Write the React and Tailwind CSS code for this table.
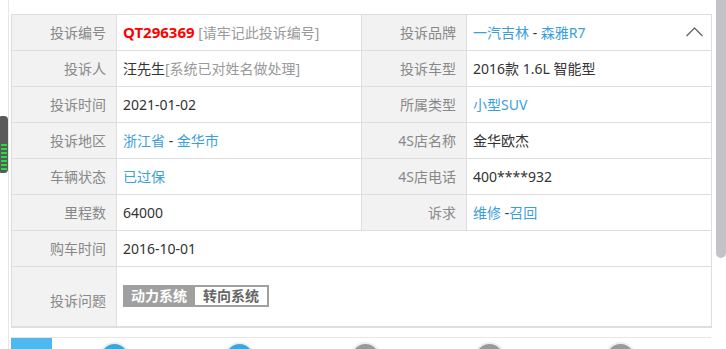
import React from "react";

const font = { fontFamily: '"Noto Sans", "Noto Sans CJK SC", sans-serif' };

function L({ children, className = "" }) {
  return (
    <td className={"w-[105px] bg-[#f2f2f2] border border-[#dedede] text-right pr-[10px] text-[#888] " + className}>
      {children}
    </td>
  );
}
function V({ children, colSpan, className = "" }) {
  return (
    <td colSpan={colSpan} className={"border border-[#dedede] pl-[6px] text-[#333] " + className}>
      {children}
    </td>
  );
}
const Blue = ({ children }) => <span className="text-[#3aa0dc]">{children}</span>;

export default function App() {
  return (
    <div className="relative w-[726px] h-[349px] overflow-hidden bg-white text-[14px]" style={font}>
      <div className="flex h-full">
        <div className="relative w-[9px] h-full border-r border-[#e6e6e6] shrink-0">
          <div className="absolute left-0 top-[116px] w-[8px] h-[57px] bg-[#5a5a5a] rounded-r-[4px] rounded-l-[1px] flex flex-col justify-end items-center pb-[3px] gap-[2px]">
            {[0, 1, 2, 3, 4, 5, 6].map((i) => (
              <div key={i} className="w-[6px] h-[2px] bg-[#22dd44]" />
            ))}
          </div>
        </div>
        <div className="pl-[2px] pt-[14px]">
          <table className="w-[700px] border-collapse table-fixed border-b-2 border-b-[#dedede]">
            <colgroup>
              <col className="w-[105px]" />
              <col className="w-[245px]" />
              <col className="w-[105px]" />
              <col className="w-[245px]" />
            </colgroup>
            <tbody>
              <tr className="h-[36px]">
                <L>投诉编号</L>
                <V>
                  <span className="text-[#f00] font-bold text-[15px]">QT296369</span>
                  <span className="text-[#999]"> [请牢记此投诉编号]</span>
                </V>
                <L>投诉品牌</L>
                <V className="pr-[8px]">
                  <div className="flex items-center justify-between">
                    <span>
                      <Blue>一汽吉林</Blue> - <Blue>森雅R7</Blue>
                    </span>
                    <svg width="17" height="10" viewBox="0 0 17 10" className="mb-[2px]">
                      <polyline points="0.5,9 8.5,1 16.5,9" fill="none" stroke="#555" strokeWidth="1.1" />
                    </svg>
                  </div>
                </V>
              </tr>
              <tr className="h-[36px]">
                <L>投诉人</L>
                <V>
                  汪先生<span className="text-[#999]">[系统已对姓名做处理]</span>
                </V>
                <L>投诉车型</L>
                <V>2016款 1.6L 智能型</V>
              </tr>
              <tr className="h-[36px]">
                <L>投诉时间</L>
                <V>2021-01-02</V>
                <L>所属类型</L>
                <V>
                  <Blue>小型SUV</Blue>
                </V>
              </tr>
              <tr className="h-[36px]">
                <L>投诉地区</L>
                <V>
                  <Blue>浙江省</Blue> - <Blue>金华市</Blue>
                </V>
                <L>4S店名称</L>
                <V>金华欧杰</V>
              </tr>
              <tr className="h-[36px]">
                <L>车辆状态</L>
                <V>
                  <Blue>已过保</Blue>
                </V>
                <L>4S店电话</L>
                <V>400****932</V>
              </tr>
              <tr className="h-[36px]">
                <L>里程数</L>
                <V>64000</V>
                <L>诉求</L>
                <V>
                  <Blue>维修</Blue> -<Blue>召回</Blue>
                </V>
              </tr>
              <tr className="h-[36px]">
                <L>购车时间</L>
                <V colSpan={3}>2016-10-01</V>
              </tr>
              <tr className="h-[60px]">
                <L className="pt-[8px]">投诉问题</L>
                <V colSpan={3}>
                  <div className="inline-flex border-2 border-[#a0a0a0] font-bold text-[14px] leading-[18px]">
                    <span className="bg-[#a0a0a0] text-white pl-[6px] pr-[8px]">动力系统</span>
                    <span className="bg-white text-[#666] px-[8px]">转向系统</span>
                  </div>
                </V>
              </tr>
            </tbody>
          </table>
          <div className="mt-[9px] w-[700px] border-t border-[#e6e6e6] flex items-start">
            <div className="w-[41px] h-[14px] bg-[#4db9ef]" />
            <div className="ml-[47px] mt-[4px] w-[31px] h-[31px] rounded-full bg-[#3aa8dc] border-2 border-[#eeeeee]" />
            <div className="ml-[94px] mt-[4px] w-[31px] h-[31px] rounded-full bg-[#3aa8dc] border-2 border-[#eeeeee]" />
            <div className="ml-[95px] mt-[4px] w-[31px] h-[31px] rounded-full bg-[#9a9a9a] border-2 border-[#eeeeee]" />
            <div className="ml-[93px] mt-[4px] w-[31px] h-[31px] rounded-full bg-[#9a9a9a] border-2 border-[#eeeeee]" />
            <div className="ml-[100px] mt-[4px] w-[31px] h-[31px] rounded-full bg-[#9a9a9a] border-2 border-[#eeeeee]" />
          </div>
        </div>
      </div>
      <div className="absolute right-0 top-0 w-[10px] h-[258px] bg-[#c2c2c7] rounded-b-[5px]" />
    </div>
  );
}
